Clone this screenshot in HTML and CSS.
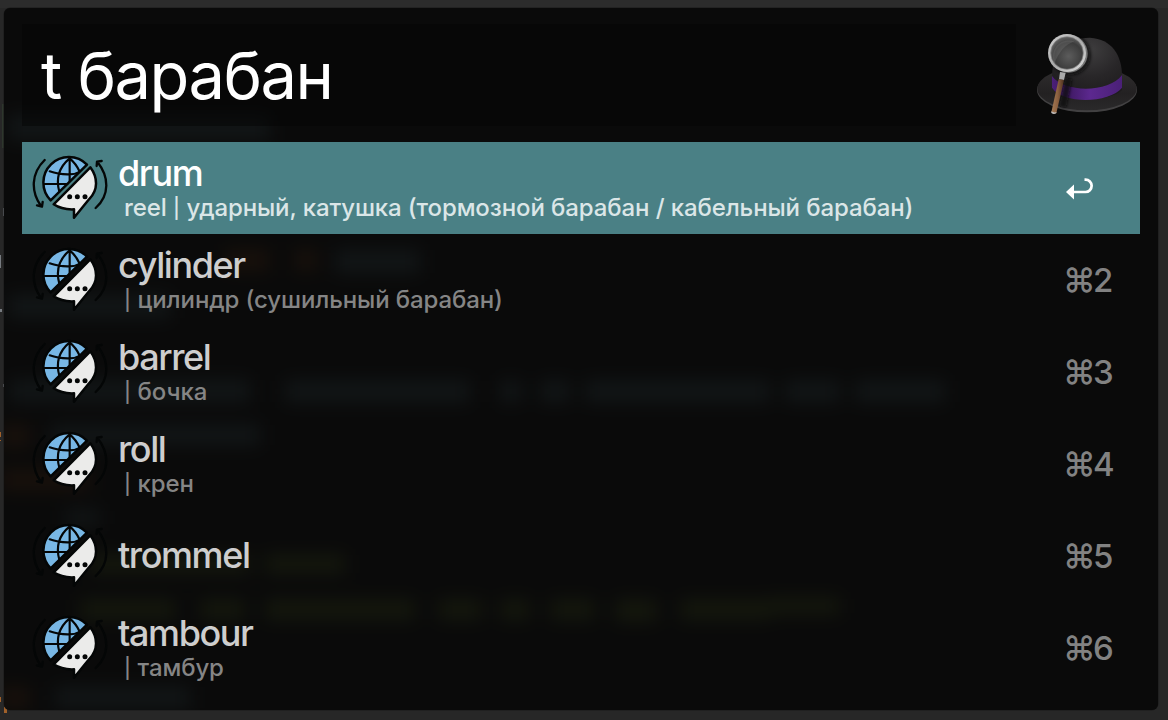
FILE: index.html
```html
<!DOCTYPE html>
<html lang="ru">
<head>
<meta charset="utf-8">
<title>t барабан</title>
<link rel="stylesheet" href="styles.css">
</head>
<body>
<svg class="defs" width="0" height="0" aria-hidden="true">
  <symbol id="translate" viewBox="21 21 240 204">
    <g fill="none" stroke="#040606" stroke-linecap="round" stroke-linejoin="round">
      <path d="M77 166A76 76 0 0 1 186 59Z" fill="#78b7e5" stroke-width="7.5"/>
      <path stroke-width="6.5" d="M134 40V109M59 117H127M74 79Q101 89 134 88Q150 88 160 82M134 40C105 64 91 97 103 140M134 40Q153 56 163 78"/>
      <path d="M196 67C218 97 221 134 192 163L147 218V193C124 194 104 190 86 178Z" fill="#ebebea" stroke-width="7.5"/>
      <path stroke-width="7" d="M59 45C18 85 17 140 48 183M36 181L51 185L53 171M212 189C255 150 252 95 218 52M215 63L216 50L230 48"/>
    </g>
    <g fill="#040606"><circle cx="134" cy="155" r="7.5"/><circle cx="157" cy="155" r="7.5"/><circle cx="180" cy="155" r="7.5"/></g>
  </symbol>
</svg>
<svg class="backdrop" viewBox="0 0 1168 720" aria-hidden="true">
  <defs>
    <filter id="soft" filterUnits="userSpaceOnUse" x="-60" y="-60" width="1288" height="840" color-interpolation-filters="sRGB"><feGaussianBlur stdDeviation="9"/></filter>
    <clipPath id="inside"><rect x="4" y="8" width="1154" height="702" rx="6"/></clipPath>
  </defs>
  <path class="edge" d="M0 0H1168V8H0Z"/>
  <path fill="#2e372d" d="M2 104H4V148H2Z"/>
  <path fill="#777b80" d="M3 208H4V216H3ZM0 255H1V268H0ZM0 309H2V312H0ZM3 384H4V387H3Z"/>
  <path fill="#a0602a" d="M0 432H1V437H0ZM0 440H1V441H0ZM0 697H1V702H0ZM4 707H7V713H4Z"/>
  <rect class="glass" x="4" y="8" width="1154" height="702" rx="6"/>
  <g clip-path="url(#inside)"><g filter="url(#soft)">
    <path class="base" d="M-60 -60H1228V780H-60Z"/>
    <path fill="#121617" d="M8 115H270V140H8ZM8 295H170V318H8ZM335 250H420V273H335ZM10 380H250V402H10ZM285 381H470V402H285ZM500 381H522V402H500ZM540 381H570V402H540ZM585 381H770V402H585ZM785 381H840V402H785ZM855 381H945V402H855ZM50 425H260V445H50ZM55 687H190V708H55ZM65 510H100V525H65Z"/>
    <path fill="#19110b" d="M225 250H270V270H225ZM294 250H318V270H294ZM0 425H30V447H0ZM0 470H90V490H0ZM0 688H30V708H0Z"/>
    <path fill="#15180d" d="M90 555H250V573H90ZM265 555H345V573H265ZM80 600H175V619H80ZM200 600H245V619H200ZM265 600H415V619H265ZM438 600H482V619H438ZM500 600H530V619H500ZM550 600H595V619H550ZM615 600H657V621H615ZM680 600H770V619H680ZM770 598H840V614H770Z"/>
  </g></g>
</svg>
<main class="panel">
  <header class="search">
    <div class="query">t барабан</div>
    <svg class="hat" viewBox="48 30 306 258" aria-hidden="true">
      <defs>
        <radialGradient id="crown" cx=".55" cy=".2" r=".8"><stop offset="0" stop-color="#3e3d3e"/><stop offset=".55" stop-color="#282628"/><stop offset="1" stop-color="#1d1b1c"/></radialGradient>
        <linearGradient id="brim" x1="0" y1="0" x2="0" y2="1"><stop offset="0" stop-color="#302e2f"/><stop offset=".6" stop-color="#232122"/><stop offset="1" stop-color="#2a292a"/></linearGradient>
        <linearGradient id="band"><stop offset="0" stop-color="#4b1f78"/><stop offset=".2" stop-color="#3c185f"/><stop offset=".55" stop-color="#5c288f"/><stop offset="1" stop-color="#4a2077"/></linearGradient>
        <linearGradient id="ring" x1="0" y1="0" x2="1" y2="1"><stop offset="0" stop-color="#d2d2d2"/><stop offset=".5" stop-color="#a9a9a9"/><stop offset="1" stop-color="#e0e0e0"/></linearGradient>
        <radialGradient id="lens" cx=".55" cy=".6" r=".6"><stop offset="0" stop-color="#5c5c5c"/><stop offset=".7" stop-color="#3c3c3c"/><stop offset="1" stop-color="#626262"/></radialGradient>
        <linearGradient id="wood"><stop offset="0" stop-color="#a67b55"/><stop offset=".5" stop-color="#8c6040"/><stop offset="1" stop-color="#4c311f"/></linearGradient>
        <filter id="shade" x="-50%" y="-50%" width="200%" height="200%"><feGaussianBlur stdDeviation="5"/></filter>
      </defs>
      <ellipse cx="201" cy="210" rx="150" ry="67" fill="#424142"/>
      <ellipse cx="201" cy="206" rx="149" ry="65" fill="url(#brim)"/>
      <path fill="url(#crown)" d="M96 172C96 95 138 53 210 53C275 57 306 105 306 168V211C268 247 132 248 96 204Z"/>
      <path fill="url(#band)" d="M96 168C133 220 268 218 306 165V203C270 249 130 255 96 203Z"/>
      <g fill="none" stroke="#080808" opacity=".75" filter="url(#shade)"><circle cx="152" cy="105" r="54" stroke-width="13"/><path stroke-width="22" d="M146 175L128 262"/></g>
      <circle cx="146" cy="101" r="57" fill="#767676"/>
      <circle cx="141" cy="99" r="57" fill="url(#ring)"/>
      <circle cx="141" cy="99" r="49" fill="url(#lens)" stroke="#888" stroke-width="2"/>
      <path fill="#999" opacity=".2" d="M100 120C94 76 130 54 163 64C131 77 120 94 103 130Z"/>
      <path fill="#aaa" d="M120 156L137 158L132 180L117 178Z"/>
      <path fill="url(#wood)" d="M116 178L132 180L109 280Q101 284 94 277Z"/>
      <path fill="#bbb" d="M94 274Q102 279 110 276L108 280Q101 284 94 279Z"/>
    </svg>
  </header>
  <ul class="results">
    <li class="row selected"><svg class="icon"><use href="#translate"/></svg><div class="copy"><div class="title">drum</div><div class="sub">reel <span class="bar">|</span> ударный, катушка (тормозной барабан / кабельный барабан)</div></div>
      <svg class="enter" viewBox="0 0 28 22" aria-hidden="true"><path fill="#fff" d="M0 14L8 6.5V21.5Z"/><path fill="none" stroke="#fff" stroke-width="2.7" d="M6 14H19.5A5.8 5.8 0 0 0 19.5 1.7H18.5"/></svg></li>
    <li class="row"><svg class="icon"><use href="#translate"/></svg><div class="copy"><div class="title">cylinder</div><div class="sub"><span class="bar">|</span> цилиндр (сушильный барабан)</div></div><div class="key">⌘2</div></li>
    <li class="row"><svg class="icon"><use href="#translate"/></svg><div class="copy"><div class="title">barrel</div><div class="sub"><span class="bar">|</span> бочка</div></div><div class="key">⌘3</div></li>
    <li class="row"><svg class="icon"><use href="#translate"/></svg><div class="copy"><div class="title">roll</div><div class="sub"><span class="bar">|</span> крен</div></div><div class="key">⌘4</div></li>
    <li class="row"><svg class="icon"><use href="#translate"/></svg><div class="copy"><div class="title single">trommel</div></div><div class="key">⌘5</div></li>
    <li class="row"><svg class="icon"><use href="#translate"/></svg><div class="copy"><div class="title">tambour</div><div class="sub"><span class="bar">|</span> тамбур</div></div><div class="key">⌘6</div></li>
  </ul>
</main>
</body>
</html>
```
FILE: styles.css
```css
* { box-sizing: border-box; }
body {
  margin: 0;
  height: 720px;
  overflow: hidden;
  background: #272727;
  font-family: Inter, "Liberation Sans", sans-serif;
}
.defs { position: absolute; }
.backdrop { position: absolute; inset: 0; width: 1168px; height: 720px; z-index: -1; }
.edge { fill: #2c2c2c; }
.base { fill: #0a0a0a; }
.glass { fill: #0a0a0a; stroke: #1b1b1b; stroke-width: 1; }
.panel {
  width: 1154px;
  height: 702px;
  margin: 8px 0 0 4px;
  padding: 16px 18px;
}
.search { display: flex; height: 118px; gap: 20px; }
.query {
  width: 994px;
  height: 102px;
  padding-left: 19px;
  background: rgba(6, 6, 6, .55);
  color: #fff;
  font-size: 65px;
  font-weight: 400;
  line-height: 104px;
  letter-spacing: -1.5px;
  white-space: pre;
}
.hat { width: 102px; height: 86px; margin-top: 6px; flex: none; }
.results { list-style: none; margin: 0; padding: 0; }
.row { display: flex; height: 92px; padding: 10px 28px 0 10px; color: #cecece; }
.selected { background: #4a8085; color: #fff; }
.icon { width: 80px; height: 68px; flex: none; }
.copy {
  flex: 1;
  margin: -10px 0 0 6px;
  height: 92px;
  display: flex;
  flex-direction: column;
  justify-content: center;
  white-space: nowrap;
}
.title { font-size: 36px; line-height: 38px; font-weight: 450; letter-spacing: -1.4px; }
.single { padding-bottom: 2px; }
.sub { padding: 1px 0 0 6px; font-size: 24px; line-height: 29px; font-weight: 500; letter-spacing: -.11px; color: #858585; }
.selected .sub { color: #dbe6e7; }
.bar { font-size: 20px; line-height: 20px; vertical-align: 1px; margin-right: .5px; }
.key { width: 49px; font-size: 33px; font-weight: 450; line-height: 72px; letter-spacing: -2.8px; color: #828282; white-space: nowrap; }
.enter { width: 28px; height: 22px; margin: 26px 18px 0 0; }
```
